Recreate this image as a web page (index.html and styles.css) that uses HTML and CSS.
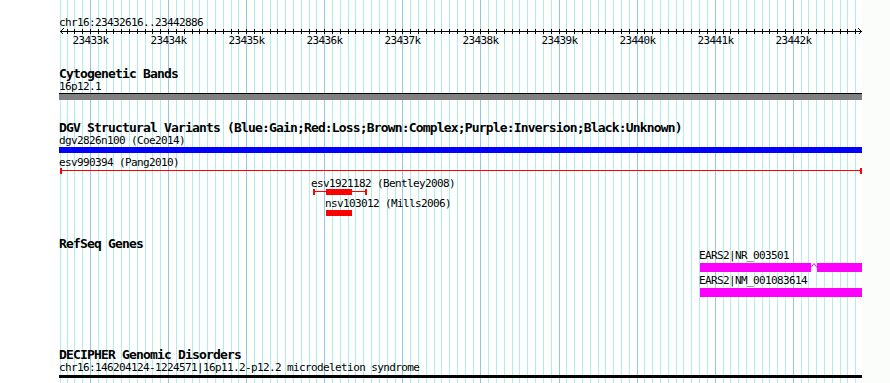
FILE: index.html
```html
<!DOCTYPE html>
<html lang="en">
<head>
    <meta charset="UTF-8">
    <title>chr16:23432616..23442886</title>
    <link rel="stylesheet" href="styles.css">
</head>
<body>
    <div class="panel">
        <svg class="grid" id="grid" width="862" height="383"></svg>

        <!-- Ruler -->
        <div class="ruler">
            <div class="label">chr16:23432616..23442886</div>
            <svg class="scale" id="scale" width="803" height="20">
                <rect x="1" y="3" width="802" height="1"></rect>
                <polyline class="arrow" points="4.5,0.5 1.5,3.5 4.5,6.5"></polyline>
                <polyline class="arrow" points="799.5,0.5 802.5,3.5 799.5,6.5"></polyline>
            </svg>
        </div>

        <!-- Cytogenetic Bands -->
        <div class="track track-cyto">
            <div class="track-title">Cytogenetic Bands</div>
            <div class="label">16p12.1</div>
            <div class="band"></div>
        </div>

        <!-- DGV -->
        <div class="track track-dgv">
            <div class="track-title">DGV Structural Variants (Blue:Gain;Red:Loss;Brown:Complex;Purple:Inversion;Black:Unknown)</div>
            <div class="label">dgv2826n100 (Coe2014)</div>
            <div class="bar bar-gain"></div>

            <div class="label label-gap">esv990394 (Pang2010)</div>
            <div class="feature-row row-pang">
                <div class="span-line" style="left:1px; width:802px"></div>
                <div class="span-cap" style="left:1px"></div>
                <div class="span-cap" style="left:801px"></div>
            </div>

            <div class="label label-gap" style="padding-left:252px">esv1921182 (Bentley2008)</div>
            <div class="feature-row row-bentley">
                <div class="span-line" style="left:254px; width:54px"></div>
                <div class="span-cap" style="left:254px"></div>
                <div class="span-cap" style="left:306px"></div>
                <div class="span-block" style="left:267px; width:26px"></div>
            </div>

            <div class="label label-gap-sm" style="padding-left:266px">nsv103012 (Mills2006)</div>
            <div class="feature-row row-mills">
                <div class="span-block" style="left:267px; width:26px"></div>
            </div>
        </div>

        <!-- RefSeq -->
        <div class="track track-refseq">
            <div class="track-title">RefSeq Genes</div>
            <div class="label label-gene" style="padding-left:640px">EARS2|NR_003501</div>
            <div class="gene-row">
                <div class="exon" style="left:641px; width:111px"></div>
                <svg class="intron" style="left:752px" width="6" height="5">
                    <polyline points="0,4.5 3,0.5 6,4.5"></polyline>
                </svg>
                <div class="exon" style="left:758px; width:45px"></div>
            </div>
            <div class="label label-gene label-gap" style="padding-left:640px">EARS2|NM_001083614</div>
            <div class="gene-row">
                <div class="exon" style="left:641px; width:162px"></div>
            </div>
        </div>

        <!-- DECIPHER -->
        <div class="track track-decipher">
            <div class="track-title">DECIPHER Genomic Disorders</div>
            <div class="label">chr16:146204124-1224571|16p11.2-p12.2 microdeletion syndrome</div>
            <div class="bar bar-disorder"></div>
        </div>
    </div>

    <script>
        const START = 23432616;
        const END = 23442886;
        const LEFT = 60;    // page x of START
        const RIGHT = 862;  // page x of END
        const PANEL_LEFT = 59;
        const svgNS = 'http://www.w3.org/2000/svg';

        function pageX(bp) {
            return Math.round(LEFT + (bp - START) * (RIGHT - LEFT) / (END - START));
        }

        function addRect(svg, x, y, w, h, cls) {
            const r = document.createElementNS(svgNS, 'rect');
            r.setAttribute('x', x);
            r.setAttribute('y', y);
            r.setAttribute('width', w);
            r.setAttribute('height', h);
            if (cls) r.setAttribute('class', cls);
            svg.appendChild(r);
        }

        const grid = document.getElementById('grid');
        const scale = document.getElementById('scale');

        // grid line at the left edge of the ruler
        addRect(grid, LEFT, 0, 1, 383, 'grid-minor');

        const first = Math.ceil(START / 100) * 100;
        for (let bp = first; bp < END; bp += 100) {
            const x = pageX(bp);
            const major = bp % 1000 === 0;
            addRect(grid, x, 0, 1, 383, major ? 'grid-major' : 'grid-minor');

            // ruler tick
            addRect(scale, x - PANEL_LEFT, 1, 1, 5);

            if (major) {
                const t = document.createElementNS(svgNS, 'text');
                t.setAttribute('x', x - PANEL_LEFT + 0.5);
                t.setAttribute('y', 16);
                t.setAttribute('text-anchor', 'middle');
                t.textContent = (bp / 1000) + 'k';
                scale.appendChild(t);
            }
        }
    </script>
</body>
</html>
```

FILE: styles.css
```css
body {
    margin: 0;
    background-color: #fbfdfb;
    font-family: "DejaVu Sans Mono", "Liberation Mono", monospace;
    color: #000;
}

.panel {
    position: relative;
    width: 803px;
    height: 383px;
    padding-left: 59px;
    background-color: #ffffff;
    overflow: hidden;
}

/* Background grid */
.grid {
    position: absolute;
    left: 0;
    top: 0;
    z-index: 0;
}

.grid-minor {
    fill: #aeeeee;
}

.grid-major {
    fill: #8ecae8;
}

.ruler,
.track {
    position: relative;
    z-index: 1;
}

/* Text */
.label {
    font-size: 11px;
    line-height: 13px;
    letter-spacing: -0.62px;
    white-space: nowrap;
}

.label-gene {
    position: relative;
    z-index: 2;
    line-height: 12px;
    margin-bottom: 1px;
}

.track-title {
    font-size: 13px;
    font-weight: bold;
    line-height: 12px;
    letter-spacing: -0.83px;
    white-space: nowrap;
}

.label-gap {
    margin-top: 3px;
}

.label-gap-sm {
    margin-top: 2px;
}

/* Ruler */
.ruler {
    padding-top: 16px;
}

.scale {
    display: block;
    margin-top: -1px;
    shape-rendering: crispEdges;
}

.scale rect {
    fill: #000;
}

.scale text {
    font-family: "DejaVu Sans Mono", monospace;
    font-size: 11px;
    letter-spacing: -0.62px;
    fill: #000;
}

.arrow {
    fill: none;
    stroke: #000;
    stroke-width: 1;
}

/* Tracks */
.track-cyto {
    margin-top: 20px;
}

.band {
    height: 6px;
    border-top: 1px solid #000;
    background-color: #808080;
}

.track-dgv {
    margin-top: 22px;
}

.bar {
    height: 6px;
}

.bar-gain {
    background-color: #0000ff;
}

.feature-row {
    position: relative;
    height: 6px;
}

.row-pang {
    margin-top: -1px;
}

.row-bentley {
    margin-top: -1px;
}

.span-line {
    position: absolute;
    top: 2px;
    height: 1px;
    background-color: #ff0000;
}

.span-cap {
    position: absolute;
    top: 0;
    width: 2px;
    height: 6px;
    background-color: #ff0000;
}

.span-block {
    position: absolute;
    top: 0;
    height: 6px;
    background-color: #ff0000;
}

.track-refseq {
    margin-top: 22px;
}

.gene-row {
    position: relative;
    height: 9px;
}

.exon {
    position: absolute;
    top: 0;
    height: 9px;
    background-color: #ff00ff;
}

.intron {
    position: absolute;
    top: 0;
}

.intron polyline {
    fill: none;
    stroke: #ff00ff;
    stroke-width: 1;
}

.track-decipher {
    margin-top: 52px;
}

.bar-disorder {
    height: 3px;
    margin-top: 1px;
    background-color: #000;
}
```
